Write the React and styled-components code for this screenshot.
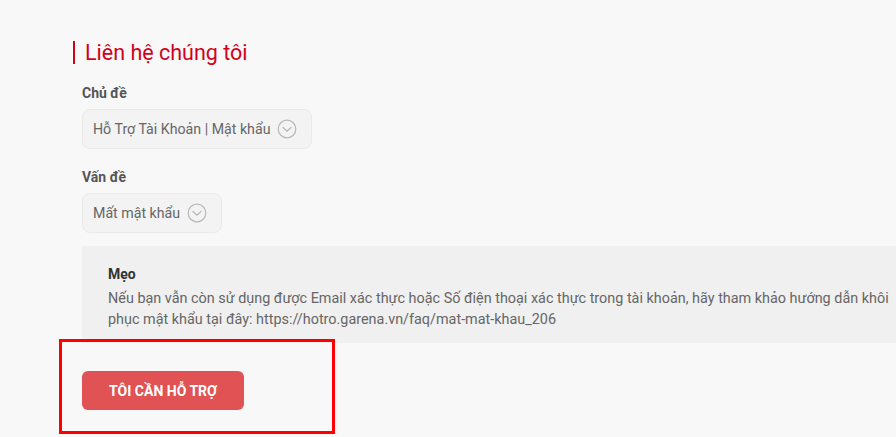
import React from 'react'
import styled, { createGlobalStyle } from 'styled-components'

const GlobalStyle = createGlobalStyle`
  html, body {
    margin: 0;
    padding: 0;
    background: #f8f8f8;
    font-family: Roboto, "Liberation Sans", Arial, sans-serif;
  }
`

const Page = styled.div`
  position: relative;
  width: 896px;
  height: 437px;
  overflow: hidden;
  padding: 41px 0 0 73px;
  box-sizing: border-box;
`

const Title = styled.h2`
  margin: 0;
  border-left: 2px solid #d0021b;
  padding-left: 10px;
  font-size: 21.5px;
  line-height: 23px;
  font-weight: 400;
  color: #d0021b;
`

const Form = styled.div`
  padding-left: 9px;
  display: flex;
  flex-direction: column;
  align-items: flex-start;
`

const Label = styled.div`
  margin-top: ${p => p.first ? '21px' : '20px'};
  font-size: 14px;
  line-height: 17px;
  font-weight: 700;
  color: #555;
`

const Select = styled.div`
  margin-top: 7px;
  height: 40px;
  box-sizing: border-box;
  display: flex;
  align-items: center;
  gap: 7px;
  padding: 0 14px 0 10px;
  background: #f3f3f3;
  border: 1px solid #e9e9e9;
  border-radius: 8px;
  font-size: 14.2px;
  color: #666;
`

const Tip = styled.div`
  margin-top: 13px;
  width: 900px;
  height: 97px;
  box-sizing: border-box;
  background: #f0f0f0;
  padding: 19px 0 0 26px;
`

const TipTitle = styled.div`
  font-size: 14px;
  font-weight: 700;
  color: #333;
  line-height: 18px;
`

const TipText = styled.p`
  margin: 5px 0 0;
  white-space: nowrap;
  font-size: 14.4px;
  line-height: 21px;
  color: #666;
`

const Button = styled.button`
  margin-top: 28px;
  width: 162px;
  height: 39px;
  border: none;
  border-radius: 6px;
  background: #e05253;
  color: #fff;
  font-family: inherit;
  font-size: 14px;
  font-weight: 700;
`

const Highlight = styled.div`
  position: absolute;
  left: 59px;
  top: 339px;
  width: 276px;
  height: 95px;
  box-sizing: border-box;
  border: 3px solid #ff0000;
  pointer-events: none;
`

const Chevron = () => (
  <svg width="20" height="20" viewBox="0 0 20 20" fill="none" stroke="#b8b8b8" strokeWidth="1.2">
    <circle cx="10" cy="10" r="8.8" />
    <path d="M6 8.5 L10 12.2 L14 8.5" strokeLinecap="round" strokeLinejoin="round" />
  </svg>
)

export default function App() {
  return (
    <Page>
      <GlobalStyle />
      <Title>Liên hệ chúng tôi</Title>
      <Form>
        <Label first>Chủ đề</Label>
        <Select>Hỗ Trợ Tài Khoản | Mật khẩu <Chevron /></Select>
        <Label>Vấn đề</Label>
        <Select>Mất mật khẩu <Chevron /></Select>
        <Tip>
          <TipTitle>Mẹo</TipTitle>
          <TipText>
            Nếu bạn vẫn còn sử dụng được Email xác thực hoặc Số điện thoại xác thực trong tài khoản, hãy tham khảo hướng dẫn khôi
            <br />
            phục mật khẩu tại đây: https://hotro.garena.vn/faq/mat-mat-khau_206
          </TipText>
        </Tip>
        <Button>TÔI CẦN HỖ TRỢ</Button>
      </Form>
      <Highlight />
    </Page>
  )
}
